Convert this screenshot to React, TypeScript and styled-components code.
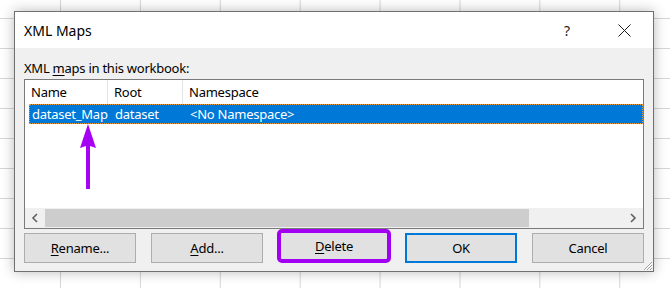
import * as React from 'react'
import styled, { createGlobalStyle } from 'styled-components'

const GlobalStyle = createGlobalStyle`
  html, body {
    margin: 0;
    padding: 0;
  }
  body {
    width: 670px;
    height: 288px;
    overflow: hidden;
    font-family: 'Noto Sans', 'Open Sans', sans-serif;
    font-size: 13px;
    letter-spacing: -0.25px;
    color: #000;
    background-color: #fff;
    background-image:
      linear-gradient(to right, #d6d6d6 1px, transparent 1px),
      linear-gradient(to bottom, #d6d6d6 1px, transparent 1px);
    background-size: 79.9px 30px;
    background-position: 60px 18px;
  }
`

const Dialog = styled.div`
  position: relative;
  margin: 11px 0 0 14px;
  width: 638px;
  height: 259px;
  border: 1px solid #707070;
  background: #f0f0f0;
  box-shadow: 0 0 12px rgba(0, 0, 0, 0.28);
  display: flex;
  flex-direction: column;
`

const TitleBar = styled.div`
  height: 36px;
  background: #fff;
  display: flex;
  align-items: center;
`

const Title = styled.div`
  flex-grow: 1;
  padding-left: 9px;
  font-size: 14px;
  letter-spacing: 0;
`

const TitleButton = styled.div<{ $w: number }>`
  width: ${p => p.$w}px;
  height: 36px;
  display: flex;
  align-items: center;
  justify-content: center;
  font-size: 14px;
  color: #1a1a1a;
`

const Body = styled.div`
  flex-grow: 1;
  padding: 12px 9px 0 9px;
  display: flex;
  flex-direction: column;
`

const Label = styled.div`
  line-height: 16px;
  margin-bottom: 3px;
`

const Key = styled.span`
  text-decoration: underline;
  text-underline-offset: 2px;
`

const ListBox = styled.div`
  height: 148px;
  border: 1px solid #7a7a7a;
  background: #fff;
  display: flex;
  flex-direction: column;
`

const Header = styled.div`
  height: 24px;
  display: flex;
`

const HeadCell = styled.div<{ $w?: number }>`
  ${p => (p.$w ? `width: ${p.$w}px;` : 'flex-grow: 1;')}
  padding-left: 6px;
  display: flex;
  align-items: center;
  border-right: 1px solid #e5e5e5;
  box-sizing: border-box;
  &:last-child {
    border-right: none;
  }
`

const Rows = styled.div`
  flex-grow: 1;
  padding-left: 4px;
`

const Row = styled.div<{ $selected?: boolean }>`
  height: 20px;
  box-sizing: border-box;
  display: flex;
  align-items: center;
  background: ${p => (p.$selected ? '#0078d7' : 'transparent')};
  color: ${p => (p.$selected ? '#fff' : '#000')};
  border: 1px dotted ${p => (p.$selected ? '#e69a3a' : 'transparent')};
`

const Cell = styled.div<{ $w?: number; $pad?: number }>`
  ${p => (p.$w ? `width: ${p.$w}px;` : 'flex-grow: 1;')}
  padding-left: ${p => p.$pad ?? 6}px;
  box-sizing: border-box;
  white-space: nowrap;
`

const ScrollBar = styled.div`
  height: 20px;
  display: flex;
  background: #f0f0f0;
`

const ScrollArrow = styled.div`
  width: 20px;
  display: flex;
  align-items: center;
  justify-content: center;
`

const Track = styled.div`
  flex-grow: 1;
  display: flex;
  align-items: stretch;
  padding: 1px 0;
`

const Thumb = styled.div`
  background: #cdcdcd;
`

const ButtonRow = styled.div`
  margin-top: 4px;
  display: flex;
  gap: 15px;
`

const Button = styled.div<{ $variant?: 'default' | 'marked' }>`
  width: 112px;
  height: 30px;
  box-sizing: border-box;
  background: #e1e1e1;
  display: flex;
  align-items: center;
  justify-content: center;
  border: 1px solid #adadad;
  ${p => p.$variant === 'default' && 'border: 2px solid #0078d7;'}
  ${p =>
    p.$variant === 'marked' &&
    `
    border: 4px solid #a100f2;
    border-radius: 5px;
    width: 114px;
    height: 34px;
    margin: -4px -1px -1px -1px;
  `}
`

const Grip = styled.svg`
  position: absolute;
  right: 0;
  bottom: 0;
`

const Pointer = styled.svg`
  position: absolute;
  left: 63px;
  top: 111px;
`

const ChevronLeft = () => (
  <svg width="8" height="10" viewBox="0 0 8 10">
    <path d="M6 1 L2 5 L6 9" fill="none" stroke="#606060" strokeWidth="1.6" />
  </svg>
)

const ChevronRight = () => (
  <svg width="8" height="10" viewBox="0 0 8 10">
    <path d="M2 1 L6 5 L2 9" fill="none" stroke="#606060" strokeWidth="1.6" />
  </svg>
)

export default function App() {
  return (
    <>
      <GlobalStyle />
      <Dialog>
        <TitleBar>
          <Title>XML Maps</Title>
          <TitleButton $w={56}>?</TitleButton>
          <TitleButton $w={58}>
            <svg width="13" height="13" viewBox="0 0 13 13">
              <path d="M0.5 0.5 L12.5 12.5 M12.5 0.5 L0.5 12.5" stroke="#1a1a1a" strokeWidth="1" />
            </svg>
          </TitleButton>
        </TitleBar>
        <Body>
          <Label>
            XML <Key>m</Key>aps in this workbook:
          </Label>
          <ListBox>
            <Header>
              <HeadCell $w={83}>Name</HeadCell>
              <HeadCell $w={75}>Root</HeadCell>
              <HeadCell>Namespace</HeadCell>
            </Header>
            <Rows>
              <Row $selected>
                <Cell $w={79} $pad={2}>dataset_Map</Cell>
                <Cell $w={75}>dataset</Cell>
                <Cell>&lt;No Namespace&gt;</Cell>
              </Row>
            </Rows>
            <ScrollBar>
              <ScrollArrow>
                <ChevronLeft />
              </ScrollArrow>
              <Track>
                <Thumb style={{ width: '484px' }} />
              </Track>
              <ScrollArrow>
                <ChevronRight />
              </ScrollArrow>
            </ScrollBar>
          </ListBox>
          <ButtonRow>
            <Button>
              <span>
                <Key>R</Key>ename...
              </span>
            </Button>
            <Button>
              <span>
                <Key>A</Key>dd...
              </span>
            </Button>
            <Button $variant="marked">
              <span>
                <Key>D</Key>elete
              </span>
            </Button>
            <Button $variant="default">OK</Button>
            <Button>Cancel</Button>
          </ButtonRow>
        </Body>
        <Pointer width="20" height="68" viewBox="0 0 20 68">
          <path d="M10 1 L18 25 L12 23 L12 66 L8 66 L8 23 L2 25 Z" fill="#a600f5" />
        </Pointer>
        <Grip width="12" height="12" viewBox="0 0 12 12">
          <path d="M11 3 L3 11 M11 6 L6 11 M11 9 L9 11" stroke="#a0a0a0" strokeWidth="1" />
          <path d="M11 4 L4 11 M11 7 L7 11 M11 10 L10 11" stroke="#fff" strokeWidth="1" />
        </Grip>
      </Dialog>
    </>
  )
}
